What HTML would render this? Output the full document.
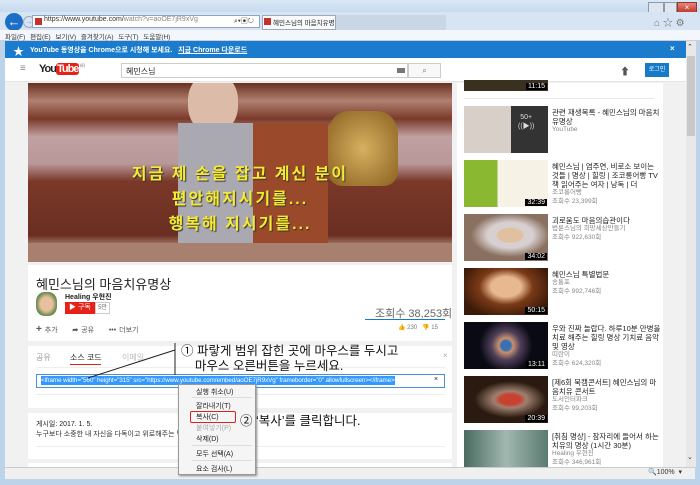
<!DOCTYPE html>
<html><head><meta charset="utf-8">
<style>
*{margin:0;padding:0;box-sizing:border-box}
body{width:700px;height:485px;overflow:hidden;position:relative;background:#bcd3ea;font-family:"Liberation Sans","Noto Sans CJK KR",sans-serif;font-size:8px;color:#222}
.a{position:absolute;white-space:nowrap}
.thumb{position:absolute;left:464px;width:84px;height:47px}
.dur{position:absolute;right:1px;bottom:1px;background:#000;color:#fff;font-size:7px;padding:0 2px}
.st{position:absolute;left:552px;width:110px;font-size:7.5px;line-height:9px;color:#222;white-space:normal}
.st .c{color:#888;font-size:6.5px;line-height:8.5px}
.mi{position:absolute;left:196px;font-size:7px;color:#222}
</style></head><body>
<!-- window chrome -->
<div class="a" style="left:0;top:0;width:700px;height:14px;background:linear-gradient(#dbe8f5,#c4d8ee)"></div>
<div class="a" style="left:648px;top:2px;width:16px;height:11px;background:#dfe6ef;border:1px solid #8a9bb0"></div>
<div class="a" style="left:664px;top:2px;width:13px;height:11px;background:#dfe6ef;border:1px solid #8a9bb0"></div>
<div class="a" style="left:677px;top:2px;width:20px;height:11px;background:linear-gradient(#e6867a,#c23a2a);border:1px solid #8a3a30;color:#fff;font-size:8px;text-align:center;line-height:9px">×</div>
<div class="a" style="left:0;top:12px;width:700px;height:19px;background:#d6e4f3"></div>
<div class="a" style="left:5px;top:13px;width:18px;height:18px;border-radius:50%;background:#1c6fc6;color:#fff;font-size:13px;text-align:center;line-height:17px;font-weight:bold">←</div>
<div class="a" style="left:23px;top:16px;width:12px;height:12px;border-radius:50%;border:1px solid #9ab;color:#9ab;font-size:8px;text-align:center;line-height:10px">→</div>
<div class="a" style="left:32px;top:15px;width:228px;height:13px;background:#fff;border:1px solid #8fa7c3"></div>
<div class="a" style="left:35px;top:18px;width:7px;height:7px;background:#c4302b"></div>
<div class="a" style="left:44px;top:16px;font-size:7px;color:#333">https://www.youtube.com/<span style="color:#888">watch?v=aoOE7jR9xVg</span></div>
<div class="a" style="left:234px;top:16px;font-size:7px;color:#333">⌕▾▣↻</div>
<div class="a" style="left:262px;top:15px;width:74px;height:15px;background:#f7f9fb;border:1px solid #9ab;overflow:hidden"></div>
<div class="a" style="left:264px;top:18px;width:7px;height:7px;background:#c4302b"></div>
<div class="a" style="left:273px;top:17px;font-size:6.5px;width:62px;overflow:hidden">혜민스님의 마음치유명상 -.. ×</div>
<div class="a" style="left:336px;top:15px;width:110px;height:15px;background:#c8d6e6"></div>
<div class="a" style="left:654px;top:14px;font-size:10px;color:#777">⌂ ☆ ⚙</div>
<div class="a" style="left:0;top:30px;width:700px;height:11px;background:#f3f6fa;border-bottom:1px solid #ccd"></div>
<div class="a" style="left:5px;top:31px;font-size:6.5px;color:#333;word-spacing:3px">파일(F) 편집(E) 보기(V) 즐겨찾기(A) 도구(T) 도움말(H)</div>
<div class="a" style="left:0;top:41px;width:5px;height:430px;background:#bcd3ea"></div>
<div class="a" style="left:695px;top:41px;width:5px;height:430px;background:#bcd3ea"></div>
<!-- page -->
<div class="a" style="left:5px;top:41px;width:681px;height:426px;background:#f1f1f1;overflow:hidden">
 <div class="a" style="left:0;top:0;width:681px;height:17px;background:#1b7ccd"></div>
 <div class="a" style="left:8px;top:2px;color:#fff;font-size:11px">★</div>
 <div class="a" style="left:25px;top:4px;color:#fff;font-size:7px;font-weight:bold">YouTube 동영상을 Chrome으로 시청해 보세요. &nbsp;&nbsp;<span style="text-decoration:underline">지금 Chrome 다운로드</span></div>
 <div class="a" style="left:665px;top:3px;color:#fff;font-size:8px;font-weight:bold">×</div>
 <div class="a" style="left:0;top:17px;width:681px;height:24px;background:#fff;border-bottom:1px solid #e5e5e5"></div>
 <div class="a" style="left:15px;top:22px;color:#888;font-size:10px">≡</div>
 <div class="a" style="left:34px;top:22px;font-size:11px;font-weight:bold;letter-spacing:-1px;color:#222">You<span style="background:#e62117;color:#fff;border-radius:3px;padding:0 1px">Tube</span><sup style="font-size:5px;color:#999;font-weight:normal">KR</sup></div>
 <div class="a" style="left:116px;top:22px;width:287px;height:15px;background:#fff;border:1px solid #ccc;font-size:8px;padding:2px 4px">혜민스님</div>
 <div class="a" style="left:392px;top:27px;width:8px;height:5px;background:#777"></div>
 <div class="a" style="left:403px;top:22px;width:33px;height:15px;background:#f8f8f8;border:1px solid #ccc;color:#777;text-align:center;font-size:8px;line-height:13px">⌕</div>
 <div class="a" style="left:615px;top:22px;font-size:10px;color:#555">⬆</div>
 <div class="a" style="left:640px;top:22px;width:24px;height:14px;background:#167ac6;color:#fff;font-size:6px;text-align:center;line-height:14px">로그인</div>
 <!-- video -->
 <div class="a" style="left:23px;top:42px;width:424px;height:179px;background:linear-gradient(#6a3020 0%,#b08070 10%,#7a3a2a 20%,#c0a0a0 30%,#b89898 45%,#7a3828 55%,#6b2e22 85%,#b09080 92%,#8a6050 100%);overflow:hidden">
  <div class="a" style="left:160px;top:-10px;width:50px;height:60px;border-radius:45%;background:#dcbca8"></div>
  <div class="a" style="left:150px;top:40px;width:150px;height:139px;background:linear-gradient(90deg,#aaa8b0 0 50%,#9a4a2a 50%)"></div>
  <div class="a" style="left:300px;top:28px;width:70px;height:75px;border-radius:30% 30% 20% 20%;background:radial-gradient(#d8b060,#8a6020)"></div>
  <div class="a" style="left:0;top:160px;width:424px;height:19px;background:#a88070"></div>
  <div class="a" style="left:0;top:79px;width:424px;text-align:center;color:#f5ea30;font-size:16px;line-height:25px;font-weight:bold;letter-spacing:2px;text-shadow:1px 1px 1px #333;white-space:normal">지금 제 손을 잡고 계신 분이<br>편안해지시기를...<br>행복해 지시기를...</div>
 </div>
 <!-- info card -->
 <div class="a" style="left:23px;top:224px;width:424px;height:76px;background:#fff"></div>
 <div class="a" style="left:31px;top:233px;font-size:13px">혜민스님의 마음치유명상</div>
 <div class="a" style="left:31px;top:251px;width:21px;height:24px;border-radius:40%;background:radial-gradient(#e8c0a0 40%,#6a8a4a 70%)"></div>
 <div class="a" style="left:60px;top:251px;font-size:7px;font-weight:bold">Healing 우현진</div>
 <div class="a" style="left:60px;top:261px;width:30px;height:12px;background:#e62117;color:#fff;font-size:7px;line-height:12px;padding-left:4px">▶ 구독</div>
 <div class="a" style="left:90px;top:261px;width:15px;height:12px;border:1px solid #ccc;font-size:6px;color:#666;text-align:center;line-height:10px">5만</div>
 <div class="a" style="left:370px;top:264px;font-size:11px;color:#666">조회수 38,253회</div>
 <div class="a" style="left:360px;top:278px;width:80px;height:1px;background:#167ac6"></div>
 <div class="a" style="left:31px;top:283px;font-size:7px;color:#555;word-spacing:1px"><b style="font-size:10px">+</b> 추가 &nbsp;&nbsp;&nbsp;&nbsp;<b>➦</b> 공유 &nbsp;&nbsp;&nbsp;&nbsp;••• 더보기</div>
 <div class="a" style="left:393px;top:283px;font-size:6px;color:#777">👍 230 &nbsp;&nbsp;👎 15</div>
 <!-- share card -->
 <div class="a" style="left:23px;top:305px;width:424px;height:62px;background:#fff"></div>
 <div class="a" style="left:31px;top:311px;font-size:8px;color:#999">공유</div>
 <div class="a" style="left:65px;top:311px;font-size:8px;color:#222">소스 코드</div>
 <div class="a" style="left:65px;top:323px;width:31px;height:1px;background:#e62117"></div>
 <div class="a" style="left:117px;top:311px;font-size:8px;color:#bbb">이메일</div>
 <div class="a" style="left:438px;top:310px;font-size:8px;color:#aaa">×</div>
 <div class="a" style="left:31px;top:326px;width:409px;height:1px;background:#eee"></div>
 <div class="a" style="left:31px;top:333px;width:409px;height:14px;border:1px solid #4a90d9;background:#fff"></div>
 <div class="a" style="left:36px;top:335px;background:#3399ff;color:#fff;font-size:6.3px;padding:1px 0;letter-spacing:-0.1px">&lt;iframe width="560" height="315" src="https://www.youtube.com/embed/aoOE7jR9xVg" frameborder="0" allowfullscreen&gt;&lt;/iframe&gt;</div>
 <div class="a" style="left:429px;top:335px;font-size:7px">×</div>
 <div class="a" style="left:31px;top:353px;width:409px;height:1px;background:#eee"></div>
 <!-- desc card -->
 <div class="a" style="left:23px;top:372px;width:424px;height:46px;background:#fff"></div>
 <div class="a" style="left:31px;top:378px;font-size:7px">게시일: 2017. 1. 5.</div>
 <div class="a" style="left:31px;top:388px;font-size:7px;color:#333">누구보다 소중한 내 자신을 다독이고 위로해주는 명</div>
 <div class="a" style="left:31px;top:405px;width:409px;height:1px;background:#eee"></div>
 <div class="a" style="left:23px;top:422px;width:424px;height:10px;background:#fff"></div>
 <!-- sidebar -->
 <div class="a" style="left:452px;top:42px;width:206px;height:390px;background:#fff"></div>
</div>
<!-- sidebar contents -->
<div class="thumb" style="top:80px;height:11px;background:#3a3020"><span class="dur">11:15</span></div>
<div class="a" style="left:464px;top:98px;width:190px;height:1px;background:#e8e8e8"></div>
<div class="thumb" style="top:106px;background:linear-gradient(90deg,#d8d0c8 0 56%,#333 56%)"><span class="a" style="left:54px;top:8px;color:#ddd;font-size:7px;text-align:center">50+<br>((▶))</span></div>
<div class="st" style="top:108px">관련 재생목록 - 혜민스님의 마음치유명상<div class="c">YouTube</div></div>
<div class="thumb" style="top:160px;background:linear-gradient(90deg,#8ab830 0 40%,#f6f2e6 40%)"><span class="dur">32:39</span></div>
<div class="st" style="top:162px">혜민스님 | 염주연, 비로소 보이는 것들 | 명상 | 힐링 | 조코롱어빵 TV 책 읽어주는 여자 | 낭독 | 더<div class="c">조코롱어빵<br>조회수 23,399회</div></div>
<div class="thumb" style="top:214px;background:radial-gradient(ellipse at 55% 45%,#e0c0a0 0 20%,#d8d0d0 21% 35%,#8a7060 60%)"><span class="dur">34:02</span></div>
<div class="st" style="top:216px">괴로움도 마음의습관이다<div class="c">법륜스님의 희망세상만들기<br>조회수 922,630회</div></div>
<div class="thumb" style="top:268px;background:radial-gradient(ellipse at 50% 40%,#e8b890 0 25%,#7a3a18 45%,#3a1a08 80%)"><span class="dur">50:15</span></div>
<div class="st" style="top:270px">혜민스님 특별법문<div class="c">송통포<br>조회수 992,746회</div></div>
<div class="thumb" style="top:322px;background:radial-gradient(circle at 50% 50%,#3a70b0 0 10%,#c89070 15%,#50405a 30%,#0a0a14 55%)"><span class="dur">13:11</span></div>
<div class="st" style="top:324px">우와 진짜 놀랍다. 하루10분 만병을 치료 해주는 힐링 명상 기치료 음악 및 영상<div class="c">띠란이<br>조회수 624,320회</div></div>
<div class="thumb" style="top:376px;background:radial-gradient(ellipse at 55% 50%,#c84030 0 15%,#a08070 25%,#2a1a10 55%)"><span class="dur">20:39</span></div>
<div class="st" style="top:378px">[제6회 북캠콘서트] 혜민스님의 마음치유 콘서트<div class="c">도서인터파크<br>조회수 99,203회</div></div>
<div class="thumb" style="top:430px;height:37px;background:linear-gradient(90deg,#4a6a60,#a0b8b0 50%,#5a7a70)"></div>
<div class="st" style="top:432px">[취침 명상] - 잠자리에 들어서 하는 치유의 명상 (1시간 30분)<div class="c">Healing 우현진<br>조회수 346,961회</div></div>
<!-- scrollbar -->
<div class="a" style="left:686px;top:41px;width:10px;height:426px;background:#e8e8e8"></div>
<div class="a" style="left:687px;top:56px;width:8px;height:80px;background:#c8c8c8"></div>
<div class="a" style="left:687px;top:43px;font-size:7px;color:#333">⌃</div>
<div class="a" style="left:687px;top:453px;font-size:7px;color:#333">⌄</div>
<!-- status bar -->
<div class="a" style="left:5px;top:467px;width:690px;height:12px;background:#f0f0f0;border-top:1px solid #ccc"></div>
<div class="a" style="left:648px;top:468px;font-size:7px;color:#333">🔍100% &nbsp;▾</div>
<div class="a" style="left:0;top:479px;width:700px;height:6px;background:#bcd3ea"></div>
<!-- annotations -->
<svg class="a" style="left:0;top:0" width="700" height="485"><line x1="175" y1="343" x2="175" y2="375" stroke="#222" stroke-width="1"/><line x1="175" y1="350" x2="88" y2="378" stroke="#222" stroke-width="1"/></svg>
<div class="a" style="left:181px;top:344px;font-size:12.5px;color:#111;line-height:15px">① 파랗게 범위 잡힌 곳에 마우스를 두시고<br>&nbsp;&nbsp;&nbsp;&nbsp;마우스 오른버튼을 누르세요.</div>
<!-- context menu -->
<div class="a" style="left:178px;top:384px;width:78px;height:91px;background:#f5f5f5;border:1px solid #999;box-shadow:1px 1px 2px #888"></div>
<div class="mi" style="top:387px">실행 취소(U)</div>
<div class="a" style="left:192px;top:397px;width:60px;height:1px;background:#ddd"></div>
<div class="mi" style="top:401px">잘라내기(T)</div>
<div class="mi" style="top:412px">복사(C)</div>
<div class="a" style="left:190px;top:411px;width:46px;height:12px;border:1.5px solid #e02020;border-radius:2px"></div>
<div class="mi" style="top:423px;color:#aaa">붙여넣기(P)</div>
<div class="mi" style="top:434px">삭제(D)</div>
<div class="a" style="left:192px;top:445px;width:60px;height:1px;background:#ddd"></div>
<div class="mi" style="top:449px">모두 선택(A)</div>
<div class="a" style="left:192px;top:460px;width:60px;height:1px;background:#ddd"></div>
<div class="mi" style="top:464px">요소 검사(L)</div>
<div class="a" style="left:240px;top:410px;font-size:12.5px;color:#111">② ‘복사’를 클릭합니다.</div>
</body></html>
